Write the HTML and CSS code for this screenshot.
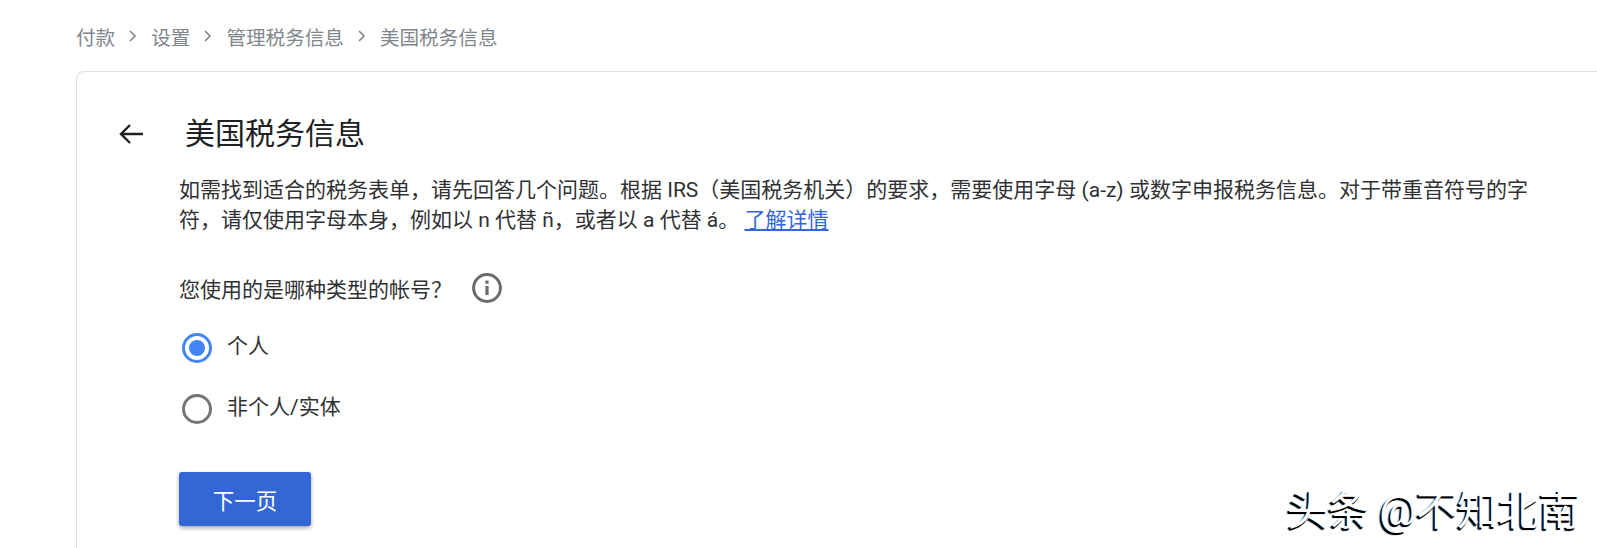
FILE: index.html
```html
<!DOCTYPE html>
<html lang="zh-CN">
<head>
<meta charset="utf-8">
<title>美国税务信息</title>
<link rel="stylesheet" href="styles.css">
</head>
<body>
<nav class="crumbs">
  <span>付款</span>
  <svg class="chev" viewBox="0 0 10 14"><path d="M2 2l5 5-5 5"/></svg>
  <span>设置</span>
  <svg class="chev" viewBox="0 0 10 14"><path d="M2 2l5 5-5 5"/></svg>
  <span>管理税务信息</span>
  <svg class="chev" viewBox="0 0 10 14"><path d="M2 2l5 5-5 5"/></svg>
  <span>美国税务信息</span>
</nav>
<main class="card">
  <header class="head">
    <svg class="back" viewBox="0 0 26 24"><path d="M25 12H3M12 3l-9 9 9 9"/></svg>
    <h1>美国税务信息</h1>
  </header>
  <div class="content">
    <p class="intro">如需找到适合的税务表单，请先回答几个问题。根据 IRS（美国税务机关）的要求，需要使用字母 (a-z) 或数字申报税务信息。对于带重音符号的字符，请仅使用字母本身，例如以 n 代替 ñ，或者以 a 代替 á。 <a href="#">了解详情</a></p>
    <div class="question">
      <span>您使用的是哪种类型的帐号？</span>
      <svg class="info" viewBox="0 0 30 30"><circle cx="15" cy="15" r="13.4"/><rect x="13.4" y="13" width="3.2" height="9"/><rect x="13.4" y="7.6" width="3.2" height="3.2"/></svg>
    </div>
    <div class="options">
      <label class="option"><span class="radio on"></span><span class="opt-text">个人</span></label>
      <label class="option"><span class="radio"></span><span class="opt-text">非个人/实体</span></label>
    </div>
    <button class="next">下一页</button>
  </div>
</main>
<div class="mark">头条 @不知北南</div>
</body>
</html>
```
FILE: styles.css
```css
html, body { margin: 0; padding: 0; height: 100%; }
body {
  overflow: hidden;
  background: #fff;
  color: #303134;
  font-family: Roboto, "Noto Sans CJK SC", sans-serif;
  position: relative;
}
.crumbs {
  display: flex;
  align-items: center;
  height: 24px;
  padding: 24px 0 23px 76px;
  font-size: 19.6px;
  color: #80868b;
}
.chev { width: 10px; height: 14px; margin: 0 13px; }
.chev path { fill: none; stroke: #80868b; stroke-width: 1.6; }
.card {
  margin-left: 76px;
  width: 1600px;
  height: 490px;
  box-sizing: border-box;
  border: 1px solid #e0e0e0;
  border-bottom: 0;
  border-radius: 8px 8px 0 0;
  overflow: hidden;
}
.head {
  display: flex;
  align-items: center;
  padding: 42px 0 0 41px;
  height: 40px;
}
.back { width: 26px; height: 24px; margin-right: 41px; }
.back path { fill: none; stroke: #202124; stroke-width: 2.4; }
h1 { margin: 0; font-size: 30px; font-weight: 400; line-height: 40px; color: #202124; }
.content { padding: 21px 0 0 102px; width: 1360px; }
.intro { margin: 0; font-size: 21px; line-height: 30px; }
.intro a { color: #3367d6; }
.question {
  display: flex;
  align-items: center;
  margin-top: 37px;
  font-size: 21px;
  height: 32px;
}
.info { width: 30px; height: 30px; margin-left: 20px; }
.info circle { fill: none; stroke: #6b6b6b; stroke-width: 3; }
.info rect { fill: #6b6b6b; }
.options { display: flex; flex-direction: column; gap: 31px; margin-top: 29px; }
.option { display: flex; align-items: center; gap: 15px; font-size: 21px; height: 30px; padding-left: 3px; }
.opt-text { padding-bottom: 8px; }
.radio {
  width: 30px; height: 30px;
  box-sizing: border-box;
  border: 3px solid #757575;
  border-radius: 50%;
  display: flex;
  align-items: center;
  justify-content: center;
}
.radio.on { border-color: #4285f4; }
.radio.on::after { content: ""; width: 16px; height: 16px; border-radius: 50%; background: #4285f4; }
.next {
  display: block;
  margin-top: 48px;
  width: 132px;
  height: 54px;
  border: 0;
  border-radius: 3px;
  background: #3367d6;
  color: #fff;
  font: inherit;
  font-size: 21.5px;
  box-shadow: 0 2px 4px rgba(0,0,0,.35);
}
.mark {
  position: absolute;
  left: 1287px;
  top: 488px;
  font-size: 41px;
  line-height: 46px;
  white-space: nowrap;
  color: #fff;
  text-shadow: -1px 2px 0 #000, -2px 2px 1px #000;
}
```
